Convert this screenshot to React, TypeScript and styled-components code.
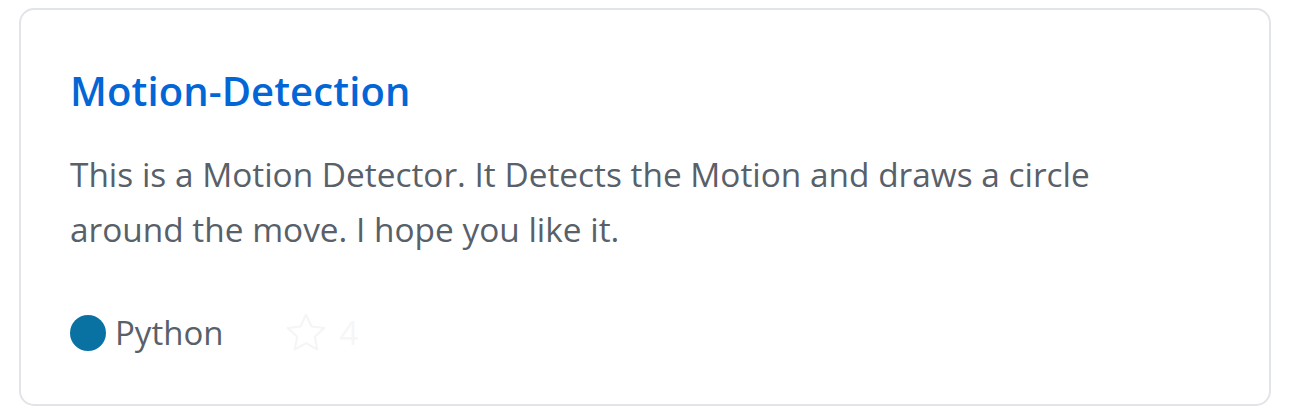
import React from "react";
import styled, { createGlobalStyle } from "styled-components";

const Global = createGlobalStyle`
  html, body { margin: 0; padding: 0; background: #ffffff; }
  body { font-family: "Open Sans", "Noto Sans", sans-serif; }
`;

const Page = styled.div`
  padding: 8px 26px 9px 19px;
`;

const Card = styled.div`
  box-sizing: border-box;
  height: 398px;
  border: 2px solid #e1e4e8;
  border-radius: 15px;
  padding: 59px 48px 0 49px;
  display: flex;
  flex-direction: column;
  align-items: flex-start;
`;

const Title = styled.a`
  font-size: 40px;
  font-weight: 600;
  color: #0366d6;
  text-decoration: none;
  line-height: 44px;
  letter-spacing: 0.1px;
`;

const Description = styled.p`
  margin: 34px 0 0;
  font-size: 33.4px;
  line-height: 55px;
  color: #586069;
  max-width: 1090px;
`;

const Meta = styled.div`
  margin-top: 53px;
  display: flex;
  align-items: center;
  gap: 60px;
  font-size: 33px;
  line-height: 40px;
  color: #586069;
`;

const Lang = styled.span`
  display: inline-flex;
  align-items: center;
  gap: 9px;
`;

const Dot = styled.span<{ $color: string }>`
  width: 36px;
  height: 36px;
  border-radius: 50%;
  background: ${(p) => p.$color};
`;

const Stars = styled.span`
  display: inline-flex;
  align-items: center;
  gap: 10px;
  color: #f6f6f6;
`;

export default function App() {
  return (
    <>
      <Global />
      <Page>
        <Card>
          <Title href="#">Motion-Detection</Title>
          <Description>
            This is a Motion Detector. It Detects the Motion and draws a circle around the move. I hope you like it.
          </Description>
          <Meta>
            <Lang>
              <Dot $color="#0a71a3" />
              Python
            </Lang>
            <Stars>
              <svg width="46" height="46" viewBox="0 0 24 24" fill="none" stroke="#f5f5f5" strokeWidth="1.1" strokeLinejoin="round">
                <path d="M12 2.5l2.9 6.1 6.6.8-4.9 4.6 1.3 6.6L12 17.3l-5.9 3.3 1.3-6.6-4.9-4.6 6.6-.8z" />
              </svg>
              4
            </Stars>
          </Meta>
        </Card>
      </Page>
    </>
  );
}
